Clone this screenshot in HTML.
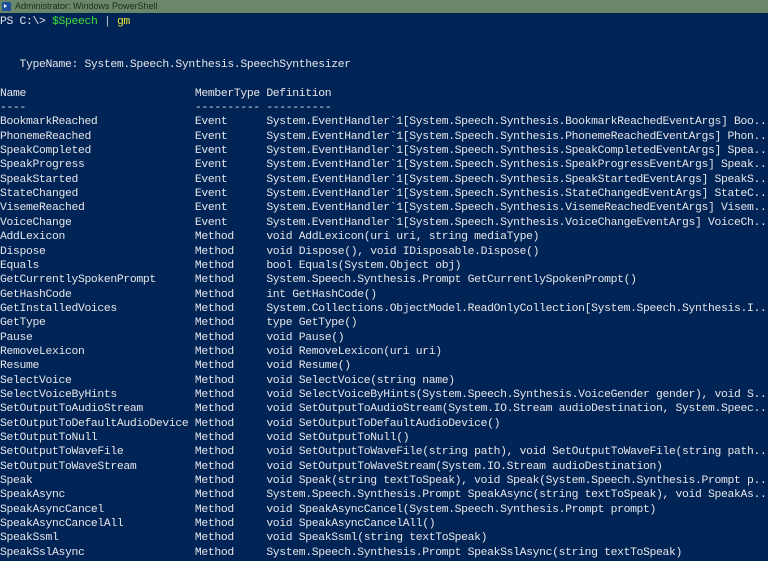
<!DOCTYPE html>
<html><head><meta charset="utf-8"><style>
html,body{margin:0;padding:0;width:768px;height:561px;overflow:hidden;background:#012456;}
.tb{position:absolute;left:0;top:0;width:768px;height:13px;background:#6a8769;}
.tb span{position:absolute;left:15px;top:0;font:9px "Liberation Sans",sans-serif;color:#1c2a1c;line-height:13px;}
.ic{position:absolute;left:2px;top:2px;width:9px;height:9px;background:#1f4f9a;}
.ic:after{content:"";position:absolute;left:2px;top:2px;border-left:3px solid #fff;border-top:2.5px solid transparent;border-bottom:2.5px solid transparent;}
pre{position:absolute;left:0;top:15px;margin:0;font-family:"Liberation Mono",monospace;font-size:11.4px;letter-spacing:-0.34px;line-height:14.35px;color:#e6e6ea;white-space:pre;width:768px;overflow:hidden;}
.g{color:#3ee03a}.y{color:#e8e830}.p{color:#c8c8c8}
</style></head><body>
<div class="tb"><div class="ic"></div><span>Administrator: Windows PowerShell</span></div>
<pre>PS C:\&gt; <span class="g">$Speech</span> <span class="p">|</span> <span class="y">gm</span>


   TypeName: System.Speech.Synthesis.SpeechSynthesizer

Name                          MemberType Definition
----                          ---------- ----------
BookmarkReached               Event      System.EventHandler`1[System.Speech.Synthesis.BookmarkReachedEventArgs] Boo...
PhonemeReached                Event      System.EventHandler`1[System.Speech.Synthesis.PhonemeReachedEventArgs] Phon...
SpeakCompleted                Event      System.EventHandler`1[System.Speech.Synthesis.SpeakCompletedEventArgs] Spea...
SpeakProgress                 Event      System.EventHandler`1[System.Speech.Synthesis.SpeakProgressEventArgs] Speak...
SpeakStarted                  Event      System.EventHandler`1[System.Speech.Synthesis.SpeakStartedEventArgs] SpeakS...
StateChanged                  Event      System.EventHandler`1[System.Speech.Synthesis.StateChangedEventArgs] StateC...
VisemeReached                 Event      System.EventHandler`1[System.Speech.Synthesis.VisemeReachedEventArgs] Visem...
VoiceChange                   Event      System.EventHandler`1[System.Speech.Synthesis.VoiceChangeEventArgs] VoiceCh...
AddLexicon                    Method     void AddLexicon(uri uri, string mediaType)
Dispose                       Method     void Dispose(), void IDisposable.Dispose()
Equals                        Method     bool Equals(System.Object obj)
GetCurrentlySpokenPrompt      Method     System.Speech.Synthesis.Prompt GetCurrentlySpokenPrompt()
GetHashCode                   Method     int GetHashCode()
GetInstalledVoices            Method     System.Collections.ObjectModel.ReadOnlyCollection[System.Speech.Synthesis.I...
GetType                       Method     type GetType()
Pause                         Method     void Pause()
RemoveLexicon                 Method     void RemoveLexicon(uri uri)
Resume                        Method     void Resume()
SelectVoice                   Method     void SelectVoice(string name)
SelectVoiceByHints            Method     void SelectVoiceByHints(System.Speech.Synthesis.VoiceGender gender), void S...
SetOutputToAudioStream        Method     void SetOutputToAudioStream(System.IO.Stream audioDestination, System.Speec...
SetOutputToDefaultAudioDevice Method     void SetOutputToDefaultAudioDevice()
SetOutputToNull               Method     void SetOutputToNull()
SetOutputToWaveFile           Method     void SetOutputToWaveFile(string path), void SetOutputToWaveFile(string path...
SetOutputToWaveStream         Method     void SetOutputToWaveStream(System.IO.Stream audioDestination)
Speak                         Method     void Speak(string textToSpeak), void Speak(System.Speech.Synthesis.Prompt p...
SpeakAsync                    Method     System.Speech.Synthesis.Prompt SpeakAsync(string textToSpeak), void SpeakAs...
SpeakAsyncCancel              Method     void SpeakAsyncCancel(System.Speech.Synthesis.Prompt prompt)
SpeakAsyncCancelAll           Method     void SpeakAsyncCancelAll()
SpeakSsml                     Method     void SpeakSsml(string textToSpeak)
SpeakSslAsync                 Method     System.Speech.Synthesis.Prompt SpeakSslAsync(string textToSpeak)</pre>
</body></html>
